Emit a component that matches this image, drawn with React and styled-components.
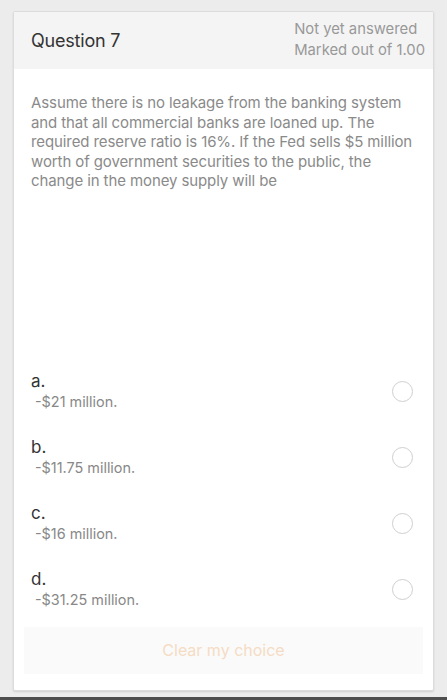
import React from "react";
import styled, { createGlobalStyle } from "styled-components";

const GlobalStyle = createGlobalStyle`
  html, body {
    margin: 0;
    padding: 0;
    background: #ececec;
    font-family: "Inter", "Liberation Sans", sans-serif;
  }
`;

const StyledPage = styled.div`
  height: 700px;
  display: flex;
  flex-direction: column;
  background: #ececec;
  box-sizing: border-box;
  padding-top: 11px;
  overflow: hidden;
`;

const StyledCard = styled.div`
  margin: 0 13px;
  background: #ffffff;
  border: 1px solid #dcdcdc;
  border-radius: 2px;
  box-shadow: 0 1px 2px rgba(0, 0, 0, 0.12);
  display: flex;
  flex-direction: column;
`;

const StyledHeader = styled.div`
  display: flex;
  justify-content: space-between;
  align-items: center;
  height: 57px;
  background: #f4f4f4;
  padding: 0 8px 0 17px;
`;

const StyledTitle = styled.div`
  font-size: 18px;
  color: #333333;
  letter-spacing: -0.2px;
`;

const StyledInfo = styled.div`
  font-size: 14.8px;
  line-height: 21px;
  color: #999999;
  margin-top: -2px;
`;

const StyledQuestion = styled.p`
  margin: 0;
  padding: 24px 8px 0 17px;
  font-size: 15px;
  line-height: 19.5px;
  color: #8a8a8a;
  letter-spacing: -0.1px;
`;

const StyledOptions = styled.div`
  margin-top: 168px;
  display: flex;
  flex-direction: column;
`;

const StyledOption = styled.div`
  display: flex;
  align-items: center;
  justify-content: space-between;
  height: 66px;
  padding: 0 20px 0 17px;
`;

const StyledLetter = styled.div`
  font-size: 17px;
  line-height: 21px;
  color: #333333;
`;

const StyledAnswer = styled.div`
  font-size: 14.4px;
  line-height: 20px;
  color: #888888;
  padding-left: 4px;
`;

const StyledRadio = styled.span`
  width: 21px;
  height: 21px;
  border-radius: 50%;
  border: 1.3px solid #cfcfcf;
  box-sizing: border-box;
`;

const StyledClearButton = styled.button`
  margin: 4px 10px 16px;
  height: 47px;
  border: none;
  background: #fafafa;
  color: #f5dcc4;
  font-family: inherit;
  font-size: 16px;
`;

const StyledBottomBar = styled.div`
  margin-top: auto;
  height: 3px;
  background: #4e4e4e;
`;

const options = [
  { letter: "a.", text: "-$21 million." },
  { letter: "b.", text: "-$11.75 million." },
  { letter: "c.", text: "-$16 million." },
  { letter: "d.", text: "-$31.25 million." },
];

export default function App() {
  return (
    <StyledPage>
      <GlobalStyle />
      <StyledCard>
        <StyledHeader>
          <StyledTitle>Question 7</StyledTitle>
          <StyledInfo>
            <div>Not yet answered</div>
            <div>Marked out of 1.00</div>
          </StyledInfo>
        </StyledHeader>
        <StyledQuestion>
          Assume there is no leakage from the banking system and that all
          commercial banks are loaned up. The required reserve ratio is 16%.
          If the Fed sells $5 million worth of government securities to the
          public, the change in the money supply will be
        </StyledQuestion>
        <StyledOptions>
          {options.map((item) => (
            <StyledOption key={item.letter}>
              <div>
                <StyledLetter>{item.letter}</StyledLetter>
                <StyledAnswer>{item.text}</StyledAnswer>
              </div>
              <StyledRadio />
            </StyledOption>
          ))}
        </StyledOptions>
        <StyledClearButton>Clear my choice</StyledClearButton>
      </StyledCard>
      <StyledBottomBar />
    </StyledPage>
  );
}
